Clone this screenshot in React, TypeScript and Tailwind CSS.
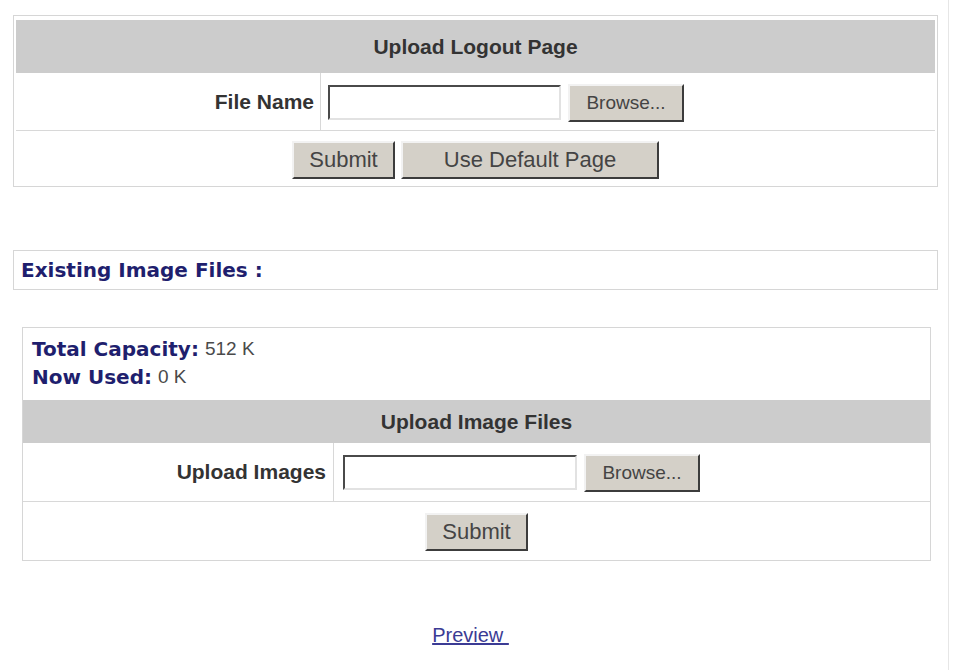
// Captive portal admin: logout page + image upload forms.
// Old-school table look: gray header bands, thin light rules, bevelled buttons.

const sans = { fontFamily: '"Liberation Sans", Arial, sans-serif' };
const wide = { fontFamily: '"DejaVu Sans", Verdana, sans-serif' };

function Bevel({ w, label, size = 'text-[22px]' }: { w: string; label: string; size?: string }) {
  return (
    <button
      type="button"
      className={`${w} ${size} h-[38px] border-2 border-t-[#f2f2f2] border-l-[#f2f2f2] border-r-[#3c3c3c] border-b-[#3c3c3c] bg-[#d4d0c8] leading-none text-[#444]`}
      style={sans}
    >
      {label}
    </button>
  );
}

function FileBox({ w }: { w: string }) {
  return (
    <div
      className={`${w} h-[35px] border-2 border-t-[#4a4a4a] border-l-[#4a4a4a] border-r-[#e2e2e2] border-b-[#e2e2e2] bg-white`}
    />
  );
}

export default function App() {
  return (
    <div className="relative min-h-[670px] w-[954px] bg-white" style={sans}>
      {/* faint page edge on the right */}
      <div className="absolute left-[948px] top-0 h-[670px] w-px bg-[#e6e6e6]" />

      {/* Upload Logout Page */}
      <div className="ml-[13px] w-[925px] pt-[15px]">
        <div className="border border-[#d6d6d6] px-[2px] pb-px pt-[4px]">
          <div className="flex h-[53px] items-center justify-center bg-[#cccccc] text-[21px] font-bold text-[#333]">
            Upload Logout Page
          </div>
          <div className="flex h-[58px] border-b border-[#d8d8d8]">
            <div className="flex w-[305px] items-center justify-end border-r border-[#d8d8d8] pr-[6px] text-[21px] font-bold text-[#333]">
              File Name
            </div>
            <div className="flex items-center gap-[7px] pl-[7px] pt-[2px]">
              <FileBox w="w-[233px]" />
              <Bevel w="w-[116px]" label="Browse..." size="text-[19px]" />
            </div>
          </div>
          <div className="flex h-[54px] items-center justify-center gap-[6px] pt-[4px]">
            <Bevel w="w-[103px]" label="Submit" />
            <Bevel w="w-[258px]" label="Use Default Page" />
          </div>
        </div>
      </div>

      {/* Existing Image Files */}
      <div className="ml-[13px] mt-[63px] flex h-[40px] w-[925px] items-center border border-[#d6d6d6] pl-[7px]">
        <span className="text-[20px] font-bold text-[#1f1f6e]" style={wide}>
          Existing Image Files :
        </span>
      </div>

      {/* Upload Image Files */}
      <div className="ml-[22px] mt-[37px] w-[909px] border border-[#d6d6d6]">
        <div className="pb-[9px] pl-[9px] pt-[7px] text-[20px]">
          <div className="flex h-[28px] items-center gap-[6px]">
            <span className="font-bold text-[#1f1f6e]" style={wide}>
              Total Capacity:
            </span>
            <span className="text-[19px] text-[#4a4a4a]">512 K</span>
          </div>
          <div className="flex h-[28px] items-center gap-[6px]">
            <span className="font-bold text-[#1f1f6e]" style={wide}>
              Now Used:
            </span>
            <span className="text-[19px] text-[#4a4a4a]">0 K</span>
          </div>
        </div>
        <div className="flex h-[43px] items-center justify-center bg-[#cccccc] text-[21px] font-bold text-[#333]">
          Upload Image Files
        </div>
        <div className="flex h-[59px] border-b border-[#d8d8d8]">
          <div className="flex w-[311px] items-center justify-end border-r border-[#d8d8d8] pr-[7px] text-[21px] font-bold text-[#333]">
            Upload Images
          </div>
          <div className="flex items-center gap-[7px] pl-[9px] pt-[1px]">
            <FileBox w="w-[234px]" />
            <Bevel w="w-[116px]" label="Browse..." size="text-[19px]" />
          </div>
        </div>
        <div className="flex h-[58px] items-center justify-center pt-[2px]">
          <Bevel w="w-[103px]" label="Submit" />
        </div>
      </div>

      {/* Preview link */}
      <div className="ml-[13px] mt-[62px] w-[915px] text-center text-[20px] leading-[24px]">
        <a href="#" className="text-[#3b3b94] underline">
          Preview&nbsp;
        </a>
      </div>
    </div>
  );
}
